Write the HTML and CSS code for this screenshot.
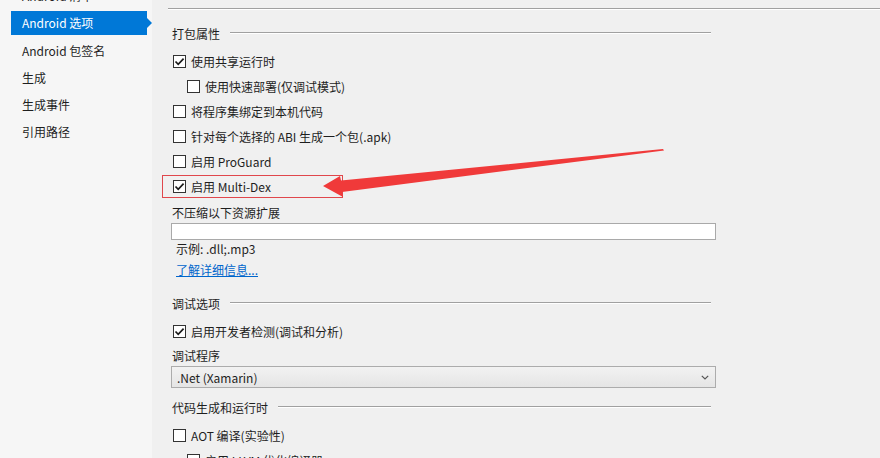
FILE: index.html
```html
<!DOCTYPE html>
<html lang="zh-CN">
<head>
    <meta charset="UTF-8">
    <title>Android 选项</title>
    <link rel="stylesheet" href="styles.css">
</head>
<body>
    <div class="page">
        <div class="sidebar">
            <div class="nav-item">Android 清单</div>
            <div class="nav-item active">Android 选项</div>
            <div class="nav-item">Android 包签名</div>
            <div class="nav-item">生成</div>
            <div class="nav-item">生成事件</div>
            <div class="nav-item">引用路径</div>
        </div>

        <div class="main">
            <div class="top-rule"></div>

            <div class="group">
                <div class="group-title"><span>打包属性</span><div class="rule"></div></div>

                <div class="row first">
                    <span class="box checked"><svg width="11" height="11" viewBox="0 0 11 11"><path d="M1.5 5.5 L4.2 8.3 L9.6 2.6" fill="none" stroke="#1a1a1a" stroke-width="1.7"/></svg></span>
                    <span>使用共享运行时</span>
                </div>
                <div class="row indent">
                    <span class="box"></span>
                    <span>使用快速部署(仅调试模式)</span>
                </div>
                <div class="row">
                    <span class="box"></span>
                    <span>将程序集绑定到本机代码</span>
                </div>
                <div class="row">
                    <span class="box"></span>
                    <span>针对每个选择的 ABI 生成一个包(.apk)</span>
                </div>
                <div class="row">
                    <span class="box"></span>
                    <span>启用 ProGuard</span>
                </div>
                <div class="row">
                    <span class="box checked"><svg width="11" height="11" viewBox="0 0 11 11"><path d="M1.5 5.5 L4.2 8.3 L9.6 2.6" fill="none" stroke="#1a1a1a" stroke-width="1.7"/></svg></span>
                    <span>启用 Multi-Dex</span>
                </div>

                <div class="field-label">不压缩以下资源扩展</div>
                <div class="text-input"></div>
                <div class="hint">示例: .dll;.mp3</div>
                <div class="more"><a href="#">了解详细信息...</a></div>
            </div>

            <div class="group debug">
                <div class="group-title"><span>调试选项</span><div class="rule"></div></div>

                <div class="row first">
                    <span class="box checked"><svg width="11" height="11" viewBox="0 0 11 11"><path d="M1.5 5.5 L4.2 8.3 L9.6 2.6" fill="none" stroke="#1a1a1a" stroke-width="1.7"/></svg></span>
                    <span>启用开发者检测(调试和分析)</span>
                </div>
                <div class="field-label tight">调试程序</div>
                <div class="select">
                    <span>.Net (Xamarin)</span>
                    <svg width="8" height="5" viewBox="0 0 8 5"><path d="M0.8 0.8 L4 4 L7.2 0.8" fill="none" stroke="#555" stroke-width="1.2"/></svg>
                </div>
            </div>

            <div class="group codegen">
                <div class="group-title"><span>代码生成和运行时</span><div class="rule"></div></div>

                <div class="row first">
                    <span class="box"></span>
                    <span>AOT 编译(实验性)</span>
                </div>
                <div class="row indent">
                    <span class="box"></span>
                    <span>启用 LLVM 优化编译器</span>
                </div>
            </div>
        </div>

        <svg class="annotation" width="880" height="458" viewBox="0 0 880 458">
            <rect x="162.5" y="175.5" width="180" height="22" fill="none" stroke="#e0474c" stroke-width="1"/>
            <polygon points="323,186 340,176 341,180.5 663,149 664,150.5 342,192 343,197" fill="#f03a3a"/>
        </svg>
    </div>
</body>
</html>
```

FILE: styles.css
```css
* {
    margin: 0;
    padding: 0;
    box-sizing: border-box;
}

body {
    font-family: "Noto Sans CJK SC", "Noto Sans", sans-serif;
    font-size: 12px;
    color: #1e1e1e;
    background: #f0f0f0;
    overflow: hidden;
}

.page {
    position: relative;
    display: flex;
    width: 880px;
    height: 458px;
    overflow: hidden;
}

.sidebar {
    width: 152px;
    flex-shrink: 0;
    background: #f6f6f6;
    margin-top: -16px;
    padding-left: 11px;
}

.nav-item {
    position: relative;
    height: 24px;
    line-height: 24px;
    margin-bottom: 3px;
    padding-left: 11px;
    width: 136px;
}

.nav-item.active {
    background: #0078d7;
    color: #fff;
    margin-bottom: 4px;
}

.nav-item.active::after {
    content: "";
    position: absolute;
    right: -5px;
    top: 7px;
    border-left: 5px solid #0078d7;
    border-top: 5px solid transparent;
    border-bottom: 5px solid transparent;
}

.main {
    flex: 1;
    background: #f0f0f0;
}

.top-rule {
    margin-top: 8px;
    margin-left: 16px;
    border-top: 1px solid #a0a0a0;
    border-bottom: 1px solid #fff;
}

.group {
    width: 544px;
    margin-left: 20px;
    margin-top: 13px;
}

.group.debug {
    margin-top: 14px;
}

.group.codegen {
    margin-top: 9px;
}

.group-title {
    display: flex;
    align-items: center;
    height: 20px;
}

.group-title .rule {
    flex: 1;
    margin-left: 10px;
    margin-right: 5px;
    border-top: 1px solid #a0a0a0;
    border-bottom: 1px solid #fff;
}

.row {
    display: flex;
    align-items: center;
    height: 25px;
    padding-left: 1px;
}

.row.first {
    margin-top: 6px;
}

.row.indent {
    padding-left: 15px;
}

.box {
    width: 13px;
    height: 13px;
    border: 1px solid #333;
    background: #fff;
    margin-right: 5px;
    display: flex;
    align-items: center;
    justify-content: center;
    flex-shrink: 0;
}

.field-label {
    height: 18px;
    line-height: 18px;
    margin-top: 5px;
}

.field-label.tight {
    margin-top: 3px;
}

.text-input {
    height: 17px;
    margin-top: 1px;
    margin-left: -1px;
    background: #fff;
    border: 1px solid #a9a9a9;
}

.hint {
    height: 17px;
    line-height: 17px;
    padding-left: 4px;
}

.more {
    height: 18px;
    line-height: 18px;
    margin-top: 4px;
    padding-left: 4px;
}

.more a {
    color: #0066cc;
    text-decoration: underline;
}

.select {
    display: flex;
    align-items: center;
    justify-content: space-between;
    height: 22px;
    margin-top: 1px;
    margin-left: -1px;
    padding: 0 6px 0 5px;
    border: 1px solid #acacac;
    background: linear-gradient(#f2f2f2, #e5e5e5);
}

.annotation {
    position: absolute;
    left: 0;
    top: 0;
    pointer-events: none;
}
```
